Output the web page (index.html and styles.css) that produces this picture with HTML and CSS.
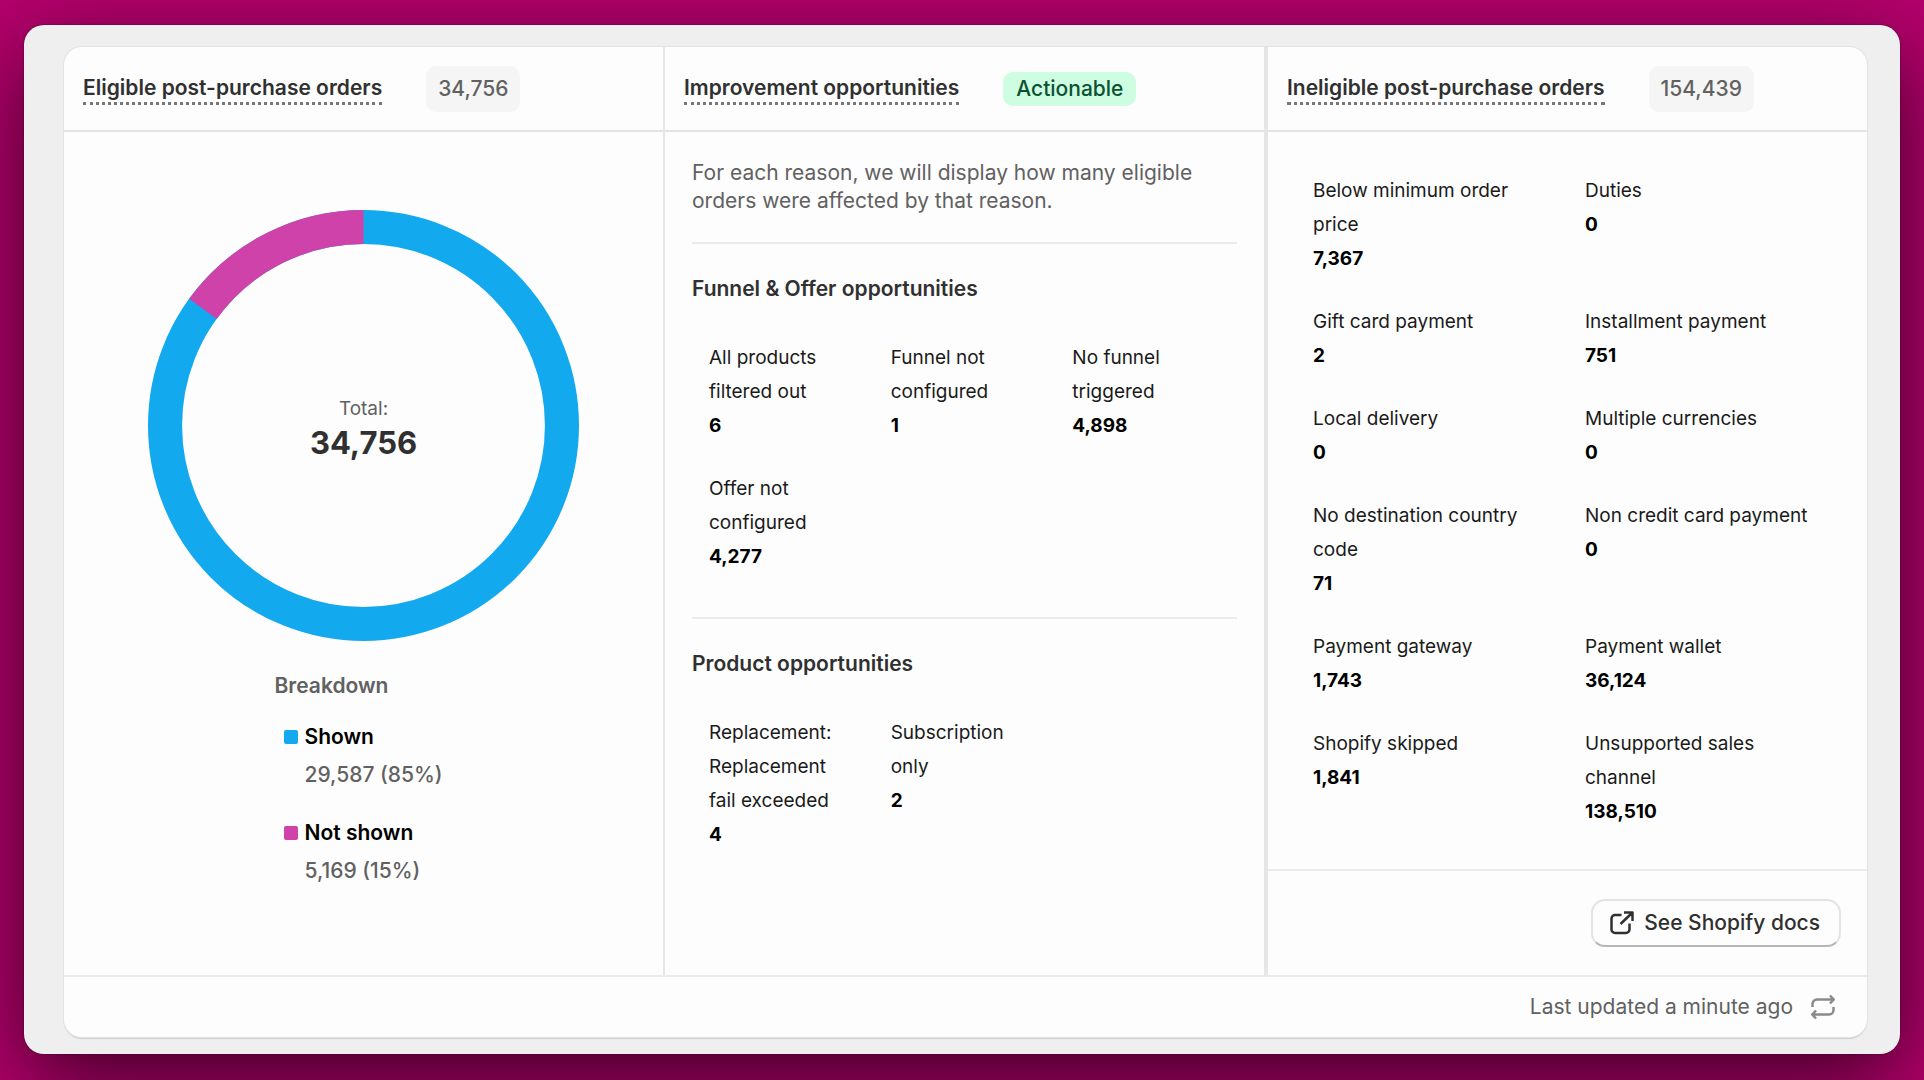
FILE: index.html
```
<!DOCTYPE html>
<html lang="en">
<head>
  <meta charset="UTF-8" />
  <meta name="viewport" content="width=device-width, initial-scale=1.0"/>
  <title>Post-purchase orders</title>
  <link rel="stylesheet" href="styles.css">
</head>
<body>
  <main class="panel">
    <div class="card">
      <div class="columns">
        <section class="column">
          <header class="column-header">
            <h2>Eligible post-purchase orders</h2>
            <span class="badge">34,756</span>
          </header>
          <div class="chart-body">
            <div class="donut">
              <svg viewBox="0 0 430 430" aria-hidden="true">
                <circle class="ring ring-shown" cx="215" cy="215" r="198" />
                <circle class="ring ring-hidden" cx="215" cy="215" r="198" pathLength="100" stroke-dasharray="15 85" stroke-dashoffset="-85" transform="rotate(-90 215 215)" />
              </svg>
              <div class="donut-label">
                <span>Total:</span>
                <strong>34,756</strong>
              </div>
            </div>
            <div class="legend">
              <h3>Breakdown</h3>
              <ul>
                <li><i class="swatch shown"></i><div><strong>Shown</strong><span>29,587 (85%)</span></div></li>
                <li><i class="swatch hidden"></i><div><strong>Not shown</strong><span>5,169 (15%)</span></div></li>
              </ul>
            </div>
          </div>
        </section>

        <section class="column">
          <header class="column-header">
            <h2>Improvement opportunities</h2>
            <span class="badge badge-success">Actionable</span>
          </header>
          <div class="reasons">
            <p class="intro">For each reason, we will display how many eligible orders were affected by that reason.</p>
            <hr>
            <h3>Funnel &amp; Offer opportunities</h3>
            <dl class="stats three">
              <div><dt>All products filtered out</dt><dd>6</dd></div>
              <div><dt>Funnel not configured</dt><dd>1</dd></div>
              <div><dt>No funnel triggered</dt><dd>4,898</dd></div>
              <div><dt>Offer not configured</dt><dd>4,277</dd></div>
            </dl>
            <hr>
            <h3>Product opportunities</h3>
            <dl class="stats three">
              <div><dt>Replacement: Replacement fail exceeded</dt><dd>4</dd></div>
              <div><dt>Subscription only</dt><dd>2</dd></div>
            </dl>
          </div>
        </section>

        <section class="column">
          <header class="column-header">
            <h2>Ineligible post-purchase orders</h2>
            <span class="badge">154,439</span>
          </header>
          <dl class="stats two">
            <div><dt>Below minimum order price</dt><dd>7,367</dd></div>
            <div><dt>Duties</dt><dd>0</dd></div>
            <div><dt>Gift card payment</dt><dd>2</dd></div>
            <div><dt>Installment payment</dt><dd>751</dd></div>
            <div><dt>Local delivery</dt><dd>0</dd></div>
            <div><dt>Multiple currencies</dt><dd>0</dd></div>
            <div><dt>No destination country code</dt><dd>71</dd></div>
            <div><dt>Non credit card payment</dt><dd>0</dd></div>
            <div><dt>Payment gateway</dt><dd>1,743</dd></div>
            <div><dt>Payment wallet</dt><dd>36,124</dd></div>
            <div><dt>Shopify skipped</dt><dd>1,841</dd></div>
            <div><dt>Unsupported sales channel</dt><dd>138,510</dd></div>
          </dl>
          <div class="column-footer">
            <a class="button" href="#">
              <svg class="icon" viewBox="0 0 24 24" aria-hidden="true">
                <path d="M11.500 4H5A3.500 3.500 0 0 0 1.500 7.500V18.500A3.500 3.500 0 0 0 5 22H16A3.500 3.500 0 0 0 19.500 18.500V12.500M14 1.500H22.500V10M22 2L10.500 13" />
              </svg>
              See Shopify docs
            </a>
          </div>
        </section>
      </div>

      <footer class="card-footer">
        <span>Last updated a minute ago</span>
        <button type="button" class="refresh" aria-label="Refresh">
          <svg class="icon" viewBox="0 0 24 24" aria-hidden="true">
            <path d="M1.500 12V9A4.500 4.500 0 0 1 6 4.500H22.500M19 0.500L22.800 4.500L19 8.500M22.500 12V15A4.500 4.500 0 0 1 18 19.500H1.500M5 15.500L1.200 19.500L5 23.500" />
          </svg>
        </button>
      </footer>
    </div>
  </main>
</body>
</html>
```
FILE: styles.css
```
* {
  box-sizing: border-box;
}
body {
  font-family: Inter, sans-serif;
  font-size: 21px;
  line-height: 28px;
  margin: 0;
  min-height: 100vh;
  padding: 25px 24px 26px;
  display: flex;
  background: #b5006c;
  color: #303030;
}
h2, h3, p, ul, dl, dd {
  margin: 0;
  padding: 0;
}
h2, h3 {
  font-size: 21px;
  font-weight: 600;
}
.panel {
  flex: 1;
  display: flex;
  padding: 22px 33px 17px 40px;
  background: #eeefee;
  border-radius: 20px;
  box-shadow: 0 28px 90px rgba(0, 0, 0, 0.66), 0 0 2px rgba(0, 0, 0, 0.5);
}
.card {
  flex: 1;
  display: flex;
  flex-direction: column;
  background: #fdfdfd;
  border-radius: 18px;
  box-shadow: 0 0 0 1px #e3e3e3, 0 2px 1px #cfcfcf;
}
.columns {
  flex: 1;
  display: grid;
  grid-template-columns: repeat(3, 1fr);
}
.column {
  display: flex;
  flex-direction: column;
  border-right: 2px solid #e6e6e6;
}
.column:last-child {
  border-right: none;
  border-left: 2px solid #e6e6e6;
}
.column-header {
  display: flex;
  align-items: center;
  gap: 44px;
  height: 85px;
  padding: 0 19px;
  border-bottom: 2px solid #e3e3e3;
}
.column-header h2 {
  margin-top: 2px;
  border-bottom: 3px dotted #777;
}
.badge {
  padding: 9px 12px;
  border-radius: 10px;
  background: #f5f5f5;
  color: #616161;
  font-weight: 500;
}
.badge-success {
  padding: 3px 13px;
  background: #cdfee1;
  color: #0c5132;
}

/* donut */
.chart-body {
  padding-top: 78px;
}
.donut {
  display: grid;
  width: 431px;
  margin: 0 auto;
}
.donut > * {
  grid-area: 1 / 1;
}
.donut svg {
  width: 100%;
}
.ring {
  fill: none;
  stroke-width: 34;
}
.ring-shown {
  stroke: #13a9ee;
}
.ring-hidden {
  stroke: #ce42a9;
}
.donut-label {
  align-self: center;
  display: flex;
  flex-direction: column;
  align-items: center;
  padding-top: 6px;
  color: #616161;
  font-size: 19px;
}
.donut-label strong {
  font-size: 31px;
  line-height: 40px;
  color: #303030;
}
.legend {
  width: 178px;
  margin: 31px auto 0;
  color: #616161;
  white-space: nowrap;
}
.legend ul {
  list-style: none;
  margin-top: 18px;
  padding-left: 9px;
  display: grid;
  gap: 20px;
}
.legend li {
  display: flex;
  gap: 7px;
  font-weight: 500;
  line-height: 38px;
}
.legend strong {
  display: block;
  font-weight: 600;
  color: #000;
}
.swatch {
  width: 14px;
  height: 14px;
  margin-top: 12px;
  border-radius: 2px;
}
.shown {
  background: #13a9ee;
}
.hidden {
  background: #ce42a9;
}

/* reasons */
.reasons {
  padding: 27px;
}
.intro {
  color: #616161;
}
hr {
  margin: 27px 0 31px;
  border: none;
  border-top: 2px solid #ebebeb;
}
.stats {
  display: grid;
  gap: 29px 0;
  font-size: 19px;
  line-height: 34px;
  color: #000;
}
.stats dt {
  color: #1a1a1a;
}
.stats dd {
  font-weight: 700;
}
.three {
  grid-template-columns: repeat(3, 1fr);
  padding: 38px 0 16px;
}
.three > div {
  padding: 0 30px 0 17px;
}
.two {
  flex: 1;
  align-content: start;
  grid-template-columns: repeat(2, 1fr);
  padding: 42px 10px 27px 45px;
}
.two > div {
  padding-right: 40px;
}
.column-footer {
  display: flex;
  justify-content: flex-end;
  padding: 28px 26px;
  border-top: 2px solid #ebebeb;
}
.button {
  display: flex;
  align-items: center;
  gap: 10px;
  height: 48px;
  padding: 0 19px 0 17px;
  border: 2px solid #e3e3e3;
  border-bottom-color: #b5b5b5;
  border-radius: 14px;
  background: #fdfdfd;
  color: #303030;
  font-weight: 500;
  text-decoration: none;
}
.icon {
  display: block;
  width: 24px;
  height: 24px;
  fill: none;
  stroke: currentColor;
  stroke-width: 2.5;
  stroke-linejoin: round;
  overflow: visible;
}
.card-footer {
  display: flex;
  align-items: center;
  justify-content: flex-end;
  gap: 18px;
  height: 62px;
  padding: 0 32px;
  border-top: 2px solid #ebebeb;
  color: #616161;
}
.refresh {
  padding: 0;
  border: none;
  background: none;
  color: #8a8a8a;
  cursor: pointer;
}
```
